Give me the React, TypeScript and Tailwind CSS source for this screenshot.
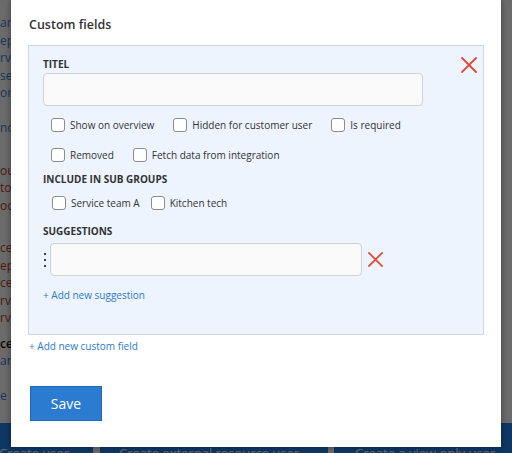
import React from "react";

const font = { fontFamily: '"Open Sans", "Liberation Sans", sans-serif' };

function RedX({ size = 16 }: { size?: number }) {
  return (
    <svg width={size} height={size} viewBox="0 0 16 16" fill="none">
      <path d="M1 1L15 15M15 1L1 15" stroke="#e8452c" strokeWidth="1.8" strokeLinecap="square" />
    </svg>
  );
}

function Check({ label, gapAfter = "mr-[19px]" }: { label: string; gapAfter?: string }) {
  return (
    <label className={`flex items-center gap-[5px] ${gapAfter}`}>
      <span className="w-[14px] h-[14px] rounded-[3px] border border-[#8c8c8c] bg-white shrink-0" />
      <span className="text-[10px] text-[#333] leading-[20px]">{label}</span>
    </label>
  );
}

function BgLine({ t, c, cls = "" }: { t: string; c: string; cls?: string }) {
  return (
    <div className={`h-[17.5px] leading-[17.5px] text-[12px] whitespace-nowrap ${c} ${cls}`}>{t}</div>
  );
}

export default function App() {
  return (
    <div className="relative w-[512px] h-[453px] overflow-hidden bg-white" style={font}>
      {/* background page */}
      <div className="flex flex-col h-full">
        <div className="pt-[14px]">
          <BgLine t="ar" c="text-[#3f82d4]" />
          <BgLine t="ep" c="text-[#3f82d4]" />
          <BgLine t="rv" c="text-[#3f82d4]" />
          <BgLine t="se" c="text-[#3f82d4]" />
          <BgLine t="or" c="text-[#3f82d4]" />
          <BgLine t="" c="" />
          <BgLine t="no" c="text-[#3f82d4]" />
        </div>
        <div className="mt-[25px]">
          <BgLine t="ou" c="text-[#b8412c]" />
          <BgLine t="to" c="text-[#b8412c]" />
          <BgLine t="oc" c="text-[#b8412c]" />
        </div>
        <div className="mt-[25px]">
          <BgLine t="ce" c="text-[#b8412c]" />
          <BgLine t="ep" c="text-[#b8412c]" />
          <BgLine t="ce" c="text-[#b8412c]" />
          <BgLine t="rv" c="text-[#b8412c]" />
          <BgLine t="rv" c="text-[#b8412c]" />
        </div>
        <div className="mt-[8px]">
          <BgLine t="ce" c="text-[#111] font-semibold" />
          <BgLine t="an" c="text-[#3f82d4]" />
          <BgLine t="" c="" />
          <BgLine t="e" c="text-[#3f82d4]" />
        </div>
        <div className="mt-auto h-[30px] flex text-white text-[13px] leading-[20px] whitespace-nowrap overflow-hidden">
          <div className="ml-[-20px] w-[113px] bg-[#2383ee] pl-[19px] pt-[20px]">Create user</div>
          <div className="ml-[7px] w-[228px] bg-[#2383ee] pl-[19px] pt-[20px]">Create external resource user</div>
          <div className="ml-[6px] flex-1 bg-[#2383ee] pl-[21px] pt-[20px]">Create a view only user</div>
        </div>
      </div>

      {/* overlay */}
      <div className="absolute inset-0 bg-black/[0.58]" />

      {/* modal */}
      <div className="absolute left-[11px] top-0 w-[490px] h-[447px] bg-white shadow-[0_0_6px_rgba(0,0,0,0.45)] px-[17px] pt-[15px]">
        <h2 className="pl-[1px] text-[12.5px] leading-[20px] font-semibold text-[#333]">Custom fields</h2>

        <div className="relative mt-[10px] border border-[#cfd7e0] bg-[#edf4fd] pl-[14px] pt-[10px] pb-[31px]">
          <button className="absolute right-[6px] top-[11px]">
            <RedX />
          </button>

          <div className="text-[10px] leading-[16px] font-bold text-[#333] uppercase">Titel</div>
          <div className="mt-[1px] w-[380px] h-[33px] rounded-[4px] border border-[#d2d2d2] bg-[#f9f9f9]" />

          <div className="mt-[9px] pl-[8px] h-[20px] flex items-center">
            <Check label="Show on overview" />
            <Check label="Hidden for customer user" />
            <Check label="Is required" />
          </div>
          <div className="mt-[10px] pl-[8px] h-[20px] flex items-center">
            <Check label="Removed" />
            <Check label="Fetch data from integration" />
          </div>

          <div className="mt-[6px] text-[10px] leading-[16px] font-bold text-[#333] uppercase">Include in sub groups</div>
          <div className="mt-[6px] pl-[9px] h-[20px] flex items-center">
            <Check label="Service team A" gapAfter="mr-[11px]" />
            <Check label="Kitchen tech" />
          </div>

          <div className="mt-[10px] text-[10px] leading-[16px] font-bold text-[#333] uppercase">Suggestions</div>
          <div className="mt-[4px] flex items-center">
            <div className="w-[7px] flex flex-col items-start gap-[4px] pl-[1px]">
              <span className="w-[2px] h-[2px] bg-[#444]" />
              <span className="w-[2px] h-[2px] bg-[#444]" />
              <span className="w-[2px] h-[2px] bg-[#444]" />
            </div>
            <div className="w-[312px] h-[33px] rounded-[4px] border border-[#d2d2d2] bg-[#f9f9f9]" />
            <button className="ml-[6px]">
              <RedX size={15} />
            </button>
          </div>

          <div className="mt-[11px] text-[10px] leading-[16px] text-[#2a7bd0]">+ Add new suggestion</div>
        </div>

        <div className="mt-[3px] pl-[1px] text-[10px] leading-[16px] text-[#2a7bd0]">+ Add new custom field</div>

        <button className="mt-[32px] ml-[2px] w-[72px] h-[35px] bg-[#2b7bd0] border border-[#2068b8] text-white text-[14px]">
          Save
        </button>
      </div>
    </div>
  );
}
